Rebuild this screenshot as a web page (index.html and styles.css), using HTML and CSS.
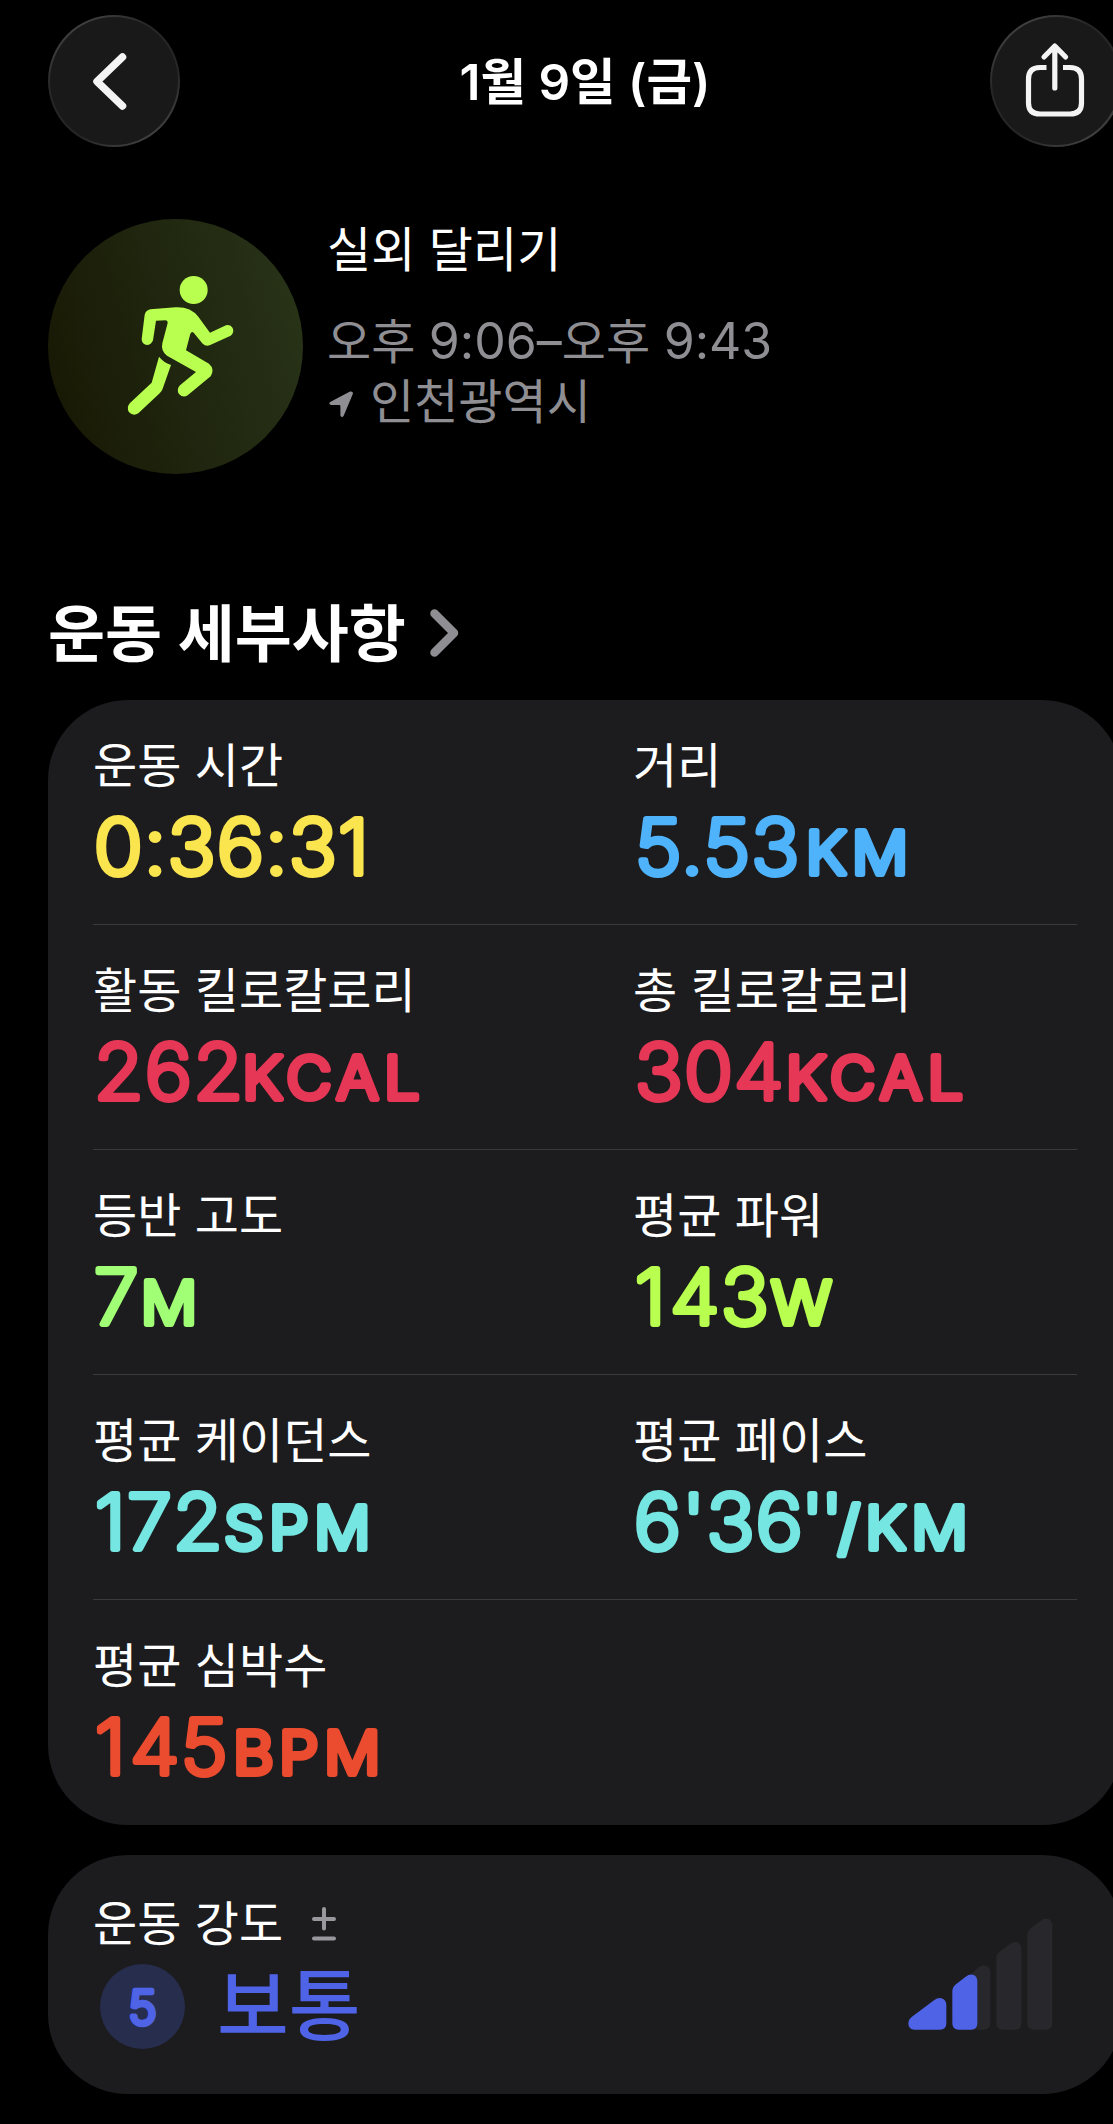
FILE: index.html
```html
<!DOCTYPE html>
<html lang="ko">
<head>
  <meta charset="UTF-8" />
  <meta name="viewport" content="width=device-width, initial-scale=1.0"/>
  <title>실외 달리기</title>
  <link rel="stylesheet" href="styles.css">
</head>
<body>
  <div class="app">
    <header class="topbar">
      <button class="circle-btn" aria-label="뒤로">
        <svg width="132" height="132" viewBox="0 0 132 132">
          <path d="M74.5 42 L49 66.5 L74.5 91" fill="none" stroke="#f4f4f4" stroke-width="7.500" stroke-linecap="round" stroke-linejoin="round"/>
        </svg>
      </button>
      <h1 class="title">1월 9일 (금)</h1>
      <button class="circle-btn" aria-label="공유">
        <svg width="132" height="132" viewBox="0 0 132 132" fill="none" stroke="#f4f4f4" stroke-width="5.2">
          <path d="M56.5 52.500 H50 Q38.500 52.500 38.500 64 V88 Q38.500 99 50 99 H80 Q91.500 99 91.500 88 V64 Q91.500 52.500 80 52.500 H73"/>
          <path d="M64.800 73 V31.500 M54 42 L64.800 31 L75.600 42" stroke-linecap="round" stroke-linejoin="round"/>
        </svg>
      </button>
    </header>

    <section class="workout">
      <div class="workout-icon">
        <svg width="255" height="255" viewBox="55 57 765 765" fill="#b8ff4f">
          <circle cx="492" cy="270" r="42"/>
          <path d="M362 328 L438 322 Q482 320 506 350 L541 398 L589 376 Q602 372 609 384 Q615 398 603 407 L540 436 Q528 440 519 431 L492 398 Q486 393 482 401 L469 451 L538 491 Q556 507 543 529 L474 586 Q460 595 448 582 Q439 568 451 556 L499 516 L412 467 Q393 454 398 430 L414 369 Q414 361 407 361 L379 362 L370 421 Q365 435 351 435 Q336 432 336 417 L345 344 Q349 331 362 328 Z"/>
          <path d="M388 470 Q401 487 424 495 L399 566 Q396 574 390 580 L326 640 Q311 650 298 637 Q289 622 301 609 L366 548 Z"/>
        </svg>
      </div>
      <div class="workout-info">
        <p class="name">실외 달리기</p>
        <p class="sub">오후 <span class="num">9:06–</span>오후 <span class="num">9:43</span></p>
        <p class="sub place">
          <svg class="arrow" width="24" height="27" viewBox="0 0 24 27" fill="#8e8e93">
            <path d="M21 .5 Q24.500 0 23.800 3 L14.800 24.500 Q13 27.500 11.400 24.500 V15.200 Q11.400 14 10.200 14 H2 Q-1 13 1.200 11 Z"/>
          </svg>
          인천광역시
        </p>
      </div>
    </section>

    <h2 class="section-title">
      운동 세부사항
      <svg class="chevron" width="29" height="48" viewBox="0 0 29 48">
        <path d="M4.500 4.500 L24 24 L4.500 43.500" fill="none" stroke="#8e8e93" stroke-width="8.500" stroke-linecap="round" stroke-linejoin="round"/>
      </svg>
    </h2>

    <section class="card details">
      <div class="row">
        <div class="metric">
          <p class="label">운동 시간</p>
          <svg class="value yellow"><text x="1" y="72">0:36:31</text></svg>
        </div>
        <div class="metric">
          <p class="label">거리</p>
          <svg class="value blue"><text x="2" y="72">5.53<tspan class="unit" dx="5">KM</tspan></text></svg>
        </div>
      </div>
      <div class="row">
        <div class="metric">
          <p class="label">활동 킬로칼로리</p>
          <svg class="value red"><text x="1" y="72">262<tspan class="unit" dx="-2">KCAL</tspan></text></svg>
        </div>
        <div class="metric">
          <p class="label">총 킬로칼로리</p>
          <svg class="value red"><text x="2" y="72">304<tspan class="unit" dx="1">KCAL</tspan></text></svg>
        </div>
      </div>
      <div class="row">
        <div class="metric">
          <p class="label">등반 고도</p>
          <svg class="value green"><text x="1" y="72">7<tspan class="unit" dx="1">M</tspan></text></svg>
        </div>
        <div class="metric">
          <p class="label">평균 파워</p>
          <svg class="value lime"><text x="2" y="72" dx="0 3">143<tspan class="unit" dx="1">W</tspan></text></svg>
        </div>
      </div>
      <div class="row">
        <div class="metric">
          <p class="label">평균 케이던스</p>
          <svg class="value cyan"><text x="2" y="72">172<tspan class="unit">SPM</tspan></text></svg>
        </div>
        <div class="metric">
          <p class="label">평균 페이스</p>
          <svg class="value cyan"><text x="1" y="72">6'36<tspan class="seconds" dx="-3">''</tspan><tspan class="unit" dx="-2">/KM</tspan></text></svg>
        </div>
      </div>
      <div class="row">
        <div class="metric">
          <p class="label">평균 심박수</p>
          <svg class="value orange"><text x="2" y="72" dx="0 3">145<tspan class="unit" dx="4">BPM</tspan></text></svg>
        </div>
      </div>
    </section>

    <section class="card effort">
      <div class="effort-text">
        <p class="label">
          운동 강도
          <svg class="plusminus" width="24" height="34" viewBox="0 0 24 34">
            <path d="M2 12 H22 M12 2 V21.500 M2 31.500 H22" fill="none" stroke="#98989d" stroke-width="4" stroke-linecap="round"/>
          </svg>
        </p>
        <div class="level">
          <svg class="badge" width="85" height="85"><text x="42.500" y="60.500" text-anchor="middle">5</text></svg>
          <span class="level-name">보통</span>
        </div>
      </div>
      <svg class="bars" width="145" height="112" viewBox="146 415 435 336">
        <g fill="#28282c">
          <path d="M318 598 L357 564 Q369 554 381 559 Q393 564 393 578 V730 Q393 750 373 750 H318 Z"/>
          <path d="M411 534 Q411 524 420 517 L450 494 Q462 484 474 488 Q486 493 486 508 V730 Q486 750 466 750 H431 Q411 750 411 730 Z"/>
          <path d="M504 464 Q504 454 513 447 L543 424 Q555 414 567 418 Q579 423 579 438 V730 Q579 750 559 750 H524 Q504 750 504 730 Z"/>
        </g>
        <g fill="#4f63e7">
          <path d="M156 713 L224 662 Q238 651 250 657 Q261 662 261 676 V731 Q261 750 242 750 H166 Q147 750 147 731 Q147 720 156 713 Z"/>
          <path d="M279 632 Q279 622 288 615 L318 592 Q331 582 343 586 Q354 591 354 606 V731 Q354 750 335 750 H298 Q279 750 279 731 Z"/>
        </g>
      </svg>
    </section>
  </div>
</body>
</html>
```
FILE: styles.css
```css
* {
  box-sizing: border-box;
}

html, body {
  margin: 0;
  background: #000;
  color: #fff;
  overflow: hidden;
}

body {
  font-family: Inter, "Noto Sans CJK KR", sans-serif;
}

p, h1, h2 {
  margin: 0;
  white-space: nowrap;
}

svg {
  display: block;
  flex: none;
}

/* wider than the window, the right edge is cut off */
.app {
  width: 1170px;
  height: 2124px;
  padding: 15px 48px 0;
}

.topbar {
  display: flex;
  justify-content: space-between;
  align-items: center;
  height: 132px;
}

.circle-btn {
  width: 132px;
  height: 132px;
  padding: 0;
  border: none;
  border-radius: 50%;
  background: linear-gradient(#191919, #191919) padding-box,
    linear-gradient(145deg, #505050, #262626 35%, #262626 65%, #505050) border-box;
  border: 2px solid transparent;
}

.circle-btn svg {
  margin: -2px;
}

.title {
  padding-top: 2px;
  font-size: 49.5px;
  font-weight: 600;
  line-height: 60px;
}

.workout {
  display: flex;
  margin-top: 72px;
  height: 255px;
}

.workout-icon {
  width: 255px;
  height: 255px;
  border-radius: 50%;
  overflow: hidden;
  background: linear-gradient(75deg, #191a05 10%, #20260f 50%, #293519 100%);
}

.workout-info {
  margin-left: 24px;
  padding-top: 1px;
}

.name {
  font-size: 48px;
  line-height: 60px;
}

.sub {
  font-size: 48px;
  line-height: 60px;
  color: #8e8e93;
}

.sub .num {
  font-size: 50px;
  line-height: 1;
}

.name + .sub {
  margin-top: 32px;
}

.place {
  display: flex;
  align-items: center;
}

.arrow {
  margin: 4px 17px 0 2px;
}

.section-title {
  display: flex;
  align-items: center;
  gap: 24px;
  margin-top: 116px;
  height: 80px;
  font-size: 62px;
  font-weight: 600;
}

.chevron {
  margin-top: 5px;
}

.card {
  background: #1c1c1e;
  border-radius: 80px;
}

.details {
  margin-top: 30px;
  padding: 0 45px;
  height: 1125px;
}

.row {
  display: flex;
  height: 225px;
  padding-top: 36px;
  border-bottom: 1px solid #3a3a3c;
}

.row:last-child {
  border-bottom: none;
}

.metric {
  width: 540px;
  flex: none;
}

.label {
  font-size: 48px;
  line-height: 60px;
}

/* thin letters with a round outline in the same colour */
.value {
  width: 440px;
  height: 90px;
  margin-top: 6px;
  overflow: visible;
  fill: currentColor;
  stroke: currentColor;
  stroke-width: 6px;
  stroke-linejoin: round;
  font-size: 76px;
  font-weight: 200;
  letter-spacing: 1.5px;
}

.value text {
  transform: scaleX(1.055);
}

.unit {
  font-size: 59px;
  font-weight: 300;
  letter-spacing: 5.5px;
}

.seconds {
  letter-spacing: -3px;
}

.yellow { color: #fbe54f; }
.blue { color: #4fb3fb; }
.red { color: #e63756; }
.green { color: #a0ff74; }
.lime { color: #b8ff4f; }
.cyan { color: #76e6e2; }
.orange { color: #eb4b2e; }

.effort {
  display: flex;
  justify-content: space-between;
  margin-top: 30px;
  height: 239px;
  padding: 39px 69px 0 45px;
}

.effort .label {
  display: flex;
  align-items: center;
}

.plusminus {
  margin-left: 29px;
}

.level {
  display: flex;
  align-items: center;
  margin: 10px 0 0 7px;
}

.badge {
  border-radius: 50%;
  background: #272d4d;
  fill: #4f63e7;
  stroke: #4f63e7;
  stroke-width: 4.5px;
  stroke-linejoin: round;
  font-size: 48px;
  font-weight: 300;
}

.level-name {
  margin-left: 32px;
  color: #4f63e7;
  font-size: 78px;
  font-weight: 500;
  line-height: 85px;
}

.bars {
  margin-top: 24px;
}
```
